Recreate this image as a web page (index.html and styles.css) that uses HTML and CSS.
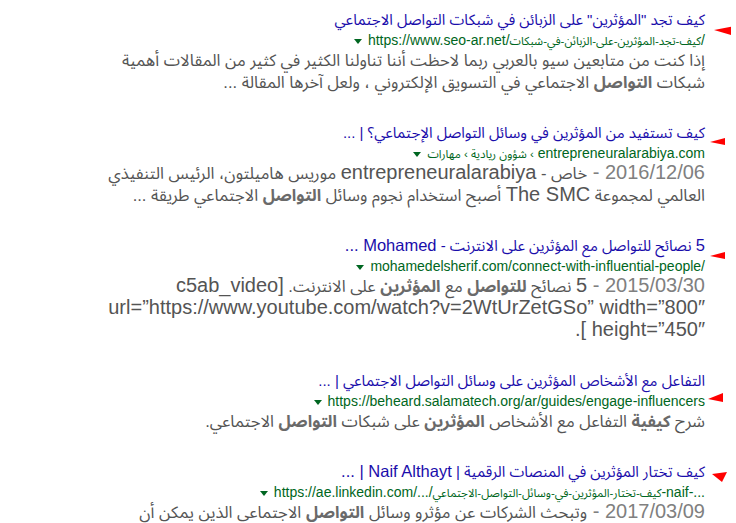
FILE: index.html
```html
<!DOCTYPE html>
<html lang="ar" dir="rtl">
<head>
  <meta charset="UTF-8">
  <meta name="viewport" content="width=device-width, initial-scale=1.0">
  <title>المؤثرين - نتائج البحث</title>
  <link rel="stylesheet" href="styles.css">
</head>
<body>
  <div class="results">

    <div class="result">
      <svg class="mark mark-1" width="24" height="14" viewBox="0 0 24 14"><polygon points="6,6 23,2.7 23,11"/></svg>
      <h3 class="title"><a href="#">كيف تجد "المؤثرين" على الزبائن في شبكات التواصل الاجتماعي</a></h3>
      <div class="url"><cite dir="ltr">https://www.seo-ar.net/<span class="ar">كيف-تجد-المؤثرين-على-الزبائن-في-شبكات</span>/</cite><span class="caret"></span></div>
      <div class="snippet">إذا كنت من متابعين سيو بالعربي ربما لاحظت أننا تناولنا الكثير في كثير من المقالات أهمية<br>شبكات <b>التواصل</b> الاجتماعي في التسويق الإلكتروني ، ولعل آخرها المقالة ...</div>
    </div>

    <div class="result">
      <svg class="mark mark-2" width="24" height="14" viewBox="0 0 24 14"><polygon points="2,6 17,2 17,9"/></svg>
      <h3 class="title"><a href="#">كيف تستفيد من المؤثرين في وسائل التواصل الإجتماعي؟ | ...</a></h3>
      <div class="url"><cite>entrepreneuralarabiya.com <span class="ar">› شؤون ريادية › مهارات</span></cite><span class="caret"></span></div>
      <div class="snippet"><span class="date" lang="en">2016/12/06 - </span>خاص - <span lang="en">entrepreneuralarabiya</span> موريس هاميلتون، الرئيس التنفيذي<br>العالمي لمجموعة <span lang="en">The SMC</span> أصبح استخدام نجوم وسائل <b>التواصل</b> الاجتماعي طريقة ...</div>
    </div>

    <div class="result">
      <svg class="mark mark-3" width="24" height="14" viewBox="0 0 24 14"><polygon points="2,6 17,2 17,9"/></svg>
      <h3 class="title"><a href="#"><span lang="en">5</span> نصائح للتواصل مع المؤثرين على الانترنت - <span lang="en">Mohamed ...</span></a></h3>
      <div class="url"><cite dir="ltr">mohamedelsherif.com/connect-with-influential-people/</cite><span class="caret"></span></div>
      <div class="snippet"><span class="date" lang="en">2015/03/30 - </span><span lang="en">5</span> نصائح <b>للتواصل</b> مع <b>المؤثرين</b> على الانترنت. <span lang="en">[c5ab_video</span><br><span lang="en">url=”https://www.youtube.com/watch?v=2WtUrZetGSo” width=”800″</span><br><span lang="en">height=”450″ ].</span></div>
    </div>

    <div class="result">
      <svg class="mark mark-4" width="24" height="14" viewBox="0 0 24 14"><polygon points="0,8 15,2 15,11"/></svg>
      <h3 class="title"><a href="#">التفاعل مع الأشخاص المؤثرين على وسائل التواصل الاجتماعي | ...</a></h3>
      <div class="url"><cite dir="ltr">https://beheard.salamatech.org/ar/guides/engage-influencers</cite><span class="caret"></span></div>
      <div class="snippet">شرح <b>كيفية</b> التفاعل مع الأشخاص <b>المؤثرين</b> على شبكات <b>التواصل</b> الاجتماعي.</div>
    </div>

    <div class="result">
      <svg class="mark mark-5" width="24" height="14" viewBox="0 0 24 14"><polygon points="4,4 19,2 14,12"/></svg>
      <h3 class="title"><a href="#">كيف تختار المؤثرين في المنصات الرقمية | <span lang="en">Naif Althayt | ...</span></a></h3>
      <div class="url"><cite dir="ltr">https://ae.linkedin.com/.../<span class="ar">كيف-تختار-المؤثرين-في-وسائل-التواصل-الاجتماعي</span>-naif-...</cite><span class="caret"></span></div>
      <div class="snippet"><span class="date" lang="en">2017/03/09 - </span>وتبحث الشركات عن مؤثرو وسائل <b>التواصل</b> الاجتماعي الذين يمكن أن</div>
    </div>

  </div>
</body>
</html>
```

FILE: styles.css
```css
body {
  margin: 0;
  background-color: #fff;
  font-family: "Liberation Sans", "Noto Sans Arabic", "Noto Naskh Arabic", "FreeSans", "DejaVu Sans", sans-serif;
}
.results {
  padding: 9px 31px 0 0;
}
.result {
  position: relative;
  margin-bottom: 29px;
  white-space: nowrap;
}
.title {
  margin: 0;
  font-size: 15px;
  font-weight: normal;
  line-height: 22px;
}
.title a {
  color: #1a0dab;
  text-decoration: none;
}
.title [lang="en"] {
  font-size: 16.5px;
  line-height: 1;
}
.url {
  height: 18px;
  line-height: 18px;
  font-size: 14px;
  color: #006621;
}
.url cite {
  font-style: normal;
}
.url .ar {
  font-size: 11.5px;
}
.caret {
  display: inline-block;
  margin-right: 6px;
  vertical-align: middle;
  border-left: 4px solid transparent;
  border-right: 4px solid transparent;
  border-top: 5px solid #006621;
}
.snippet {
  font-size: 16.5px;
  line-height: 22px;
  color: #545454;
}
.snippet [lang="en"] {
  font-size: 20px;
  line-height: 1;
}
.snippet b {
  color: #6a6a6a;
}
.date {
  color: #808080;
}
.mark {
  position: absolute;
  right: -27px;
  fill: #ff0000;
}
.mark-1 { top: 15px; }
.mark-2 { top: 14px; }
.mark-3 { top: 15px; }
.mark-4 { top: 21px; }
.mark-5 { top: 9px; }
```
